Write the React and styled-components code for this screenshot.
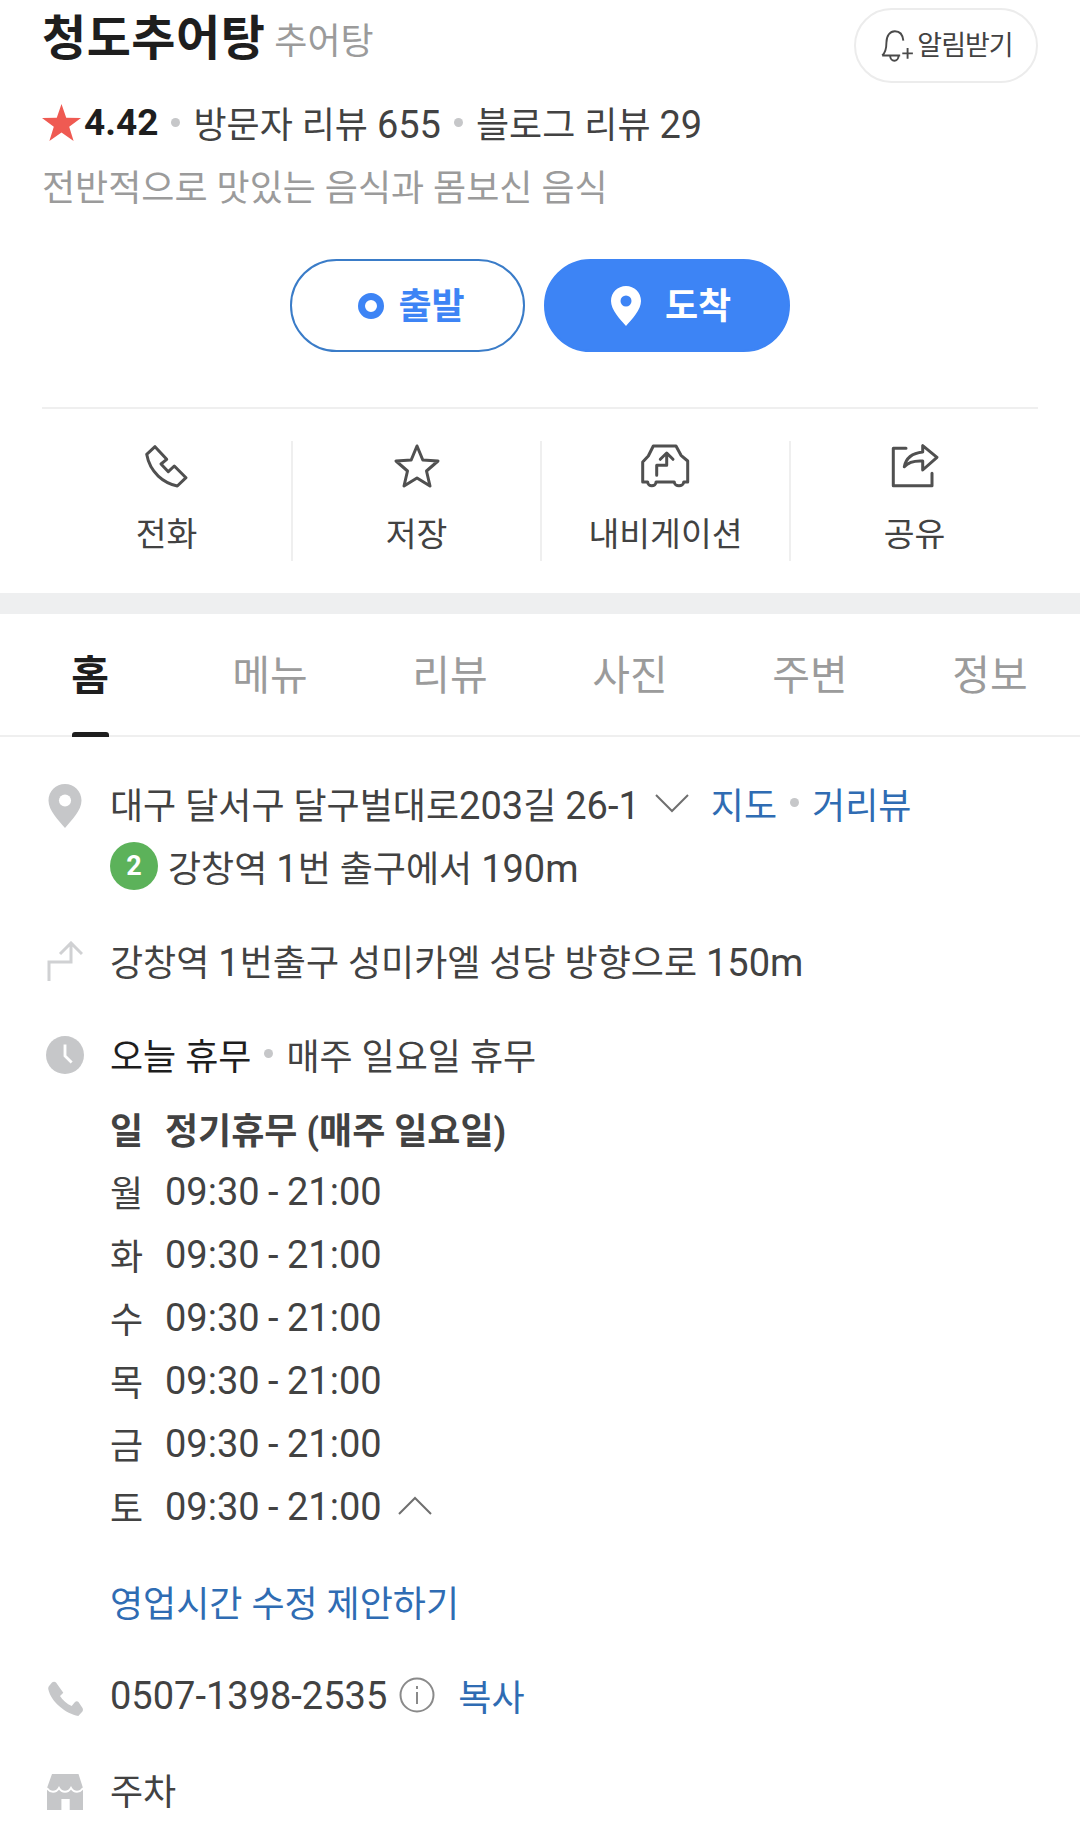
import styled, { createGlobalStyle } from 'styled-components'

const GlobalStyle = createGlobalStyle`
  html, body {
    margin: 0;
    padding: 0;
    background: #fff;
  }
  body {
    font-family: Roboto, "Noto Sans CJK KR", sans-serif;
    color: #424242;
  }
`

const TABS = ['홈', '메뉴', '리뷰', '사진', '주변', '정보']

const HOURS = [
  { day: '일', time: '정기휴무 (매주 일요일)', bold: true },
  { day: '월', time: '09:30 - 21:00' },
  { day: '화', time: '09:30 - 21:00' },
  { day: '수', time: '09:30 - 21:00' },
  { day: '목', time: '09:30 - 21:00' },
  { day: '금', time: '09:30 - 21:00' },
  { day: '토', time: '09:30 - 21:00', last: true },
]

function PhoneOutline() {
  return (
    <svg width="46" height="46" viewBox="24 12 46 46" fill="none" stroke="#505050" strokeWidth="3" strokeLinejoin="round">
      <path d="M35 15.700 46.700 28.300 41 33 48.300 40.700 54.300 35 66 46.700 57.300 55C44 52 30 42 26.700 23.300Z" />
    </svg>
  )
}

function StarOutline() {
  return (
    <svg width="48" height="46" viewBox="0 0 48 46" fill="none" stroke="#505050" strokeWidth="3" strokeLinejoin="round">
      <path d="M24 3 29.800 17 45 18 33.500 28 37 43 24 35 11 43 14.500 28 3 18 18.200 17Z" />
    </svg>
  )
}

function NaviOutline() {
  return (
    <svg width="49" height="44" viewBox="20 12 49 44" fill="none" stroke="#505050" strokeWidth="3" strokeLinejoin="round" strokeLinecap="round">
      <path d="M32.300 14H55L60 23.300 66.700 29V50H62.700C62.700 55 53.300 55 53.300 50H35C35 55 26.700 55 26.700 50H21.700V30L27.300 24Z" />
      <path d="M35.700 43.300V33.300H45.700V22M39.300 27.300 45.700 21 52 27.300" />
    </svg>
  )
}

function ShareOutline() {
  return (
    <svg width="50" height="46" viewBox="29 13 50 46" fill="none" stroke="#505050" strokeWidth="3" strokeLinejoin="round" strokeLinecap="round">
      <path d="M45 18.300H32.300V55.700H71V43.300" />
      <path d="M76 27.300 61.700 15.700V22C52 23 45 28 43.300 36.700 48 31.500 54 30.500 61.700 31V40Z" />
    </svg>
  )
}

function PinIcon({ color, hole, width, height }) {
  return (
    <svg width={width} height={height} viewBox="0 0 30 40">
      <path fill={color} d="M15 0C6.700 0 0 6.600 0 15 0 24 9 33 15 40 21 33 30 24 30 15 30 6.600 23.300 0 15 0Z" />
      <circle cx="15" cy="15" r="5.500" fill={hole} />
    </svg>
  )
}

export default function App() {
  return (
    <Page>
      <GlobalStyle />
      <Summary>
        <TitleRow>
          <TitleGroup>
            <Title>청도추어탕</Title>
            <Category>추어탕</Category>
          </TitleGroup>
          <AlertButton>
            <svg width="36" height="36" viewBox="0 0 34 34" fill="none" stroke="#4a4a4a" strokeWidth="1.800">
              <path d="M3 26C6.500 23 7 19 7 14 7 7 10.500 3 15 3 19.500 3 22.500 6.500 23 12M3 26H20M10.500 26C10.500 32.500 18.500 32.500 18.500 26" />
              <path d="M27 19V29M22 24H32" />
            </svg>
            <AlertLabel>알림받기</AlertLabel>
          </AlertButton>
        </TitleRow>
        <RatingRow>
          <svg width="39" height="37" viewBox="0 0 38 36">
            <path fill="#ef5a52" d="M19 0 23.600 13.400 38 13.600 26.500 22.200 30.800 36 19 27.700 7.200 36 11.500 22.200 0 13.600 14.400 13.400Z" />
          </svg>
          <Score>4.42</Score>
          <Dot />
          <span>방문자 리뷰 <Num>655</Num></span>
          <Dot />
          <span>블로그 리뷰 <Num>29</Num></span>
        </RatingRow>
        <Description>전반적으로 맛있는 음식과 몸보신 음식</Description>
        <RouteButtons>
          <RouteButton>
            <StartDot />
            <RouteLabel>출발</RouteLabel>
          </RouteButton>
          <RouteButton $primary>
            <PinIcon color="#fff" hole="#3d84f5" width={30} height={40} />
            <RouteLabel>도착</RouteLabel>
          </RouteButton>
        </RouteButtons>
        <Actions>
          <Action>
            <ActionIcon><PhoneOutline /></ActionIcon>
            전화
          </Action>
          <Action>
            <ActionIcon><StarOutline /></ActionIcon>
            저장
          </Action>
          <Action>
            <ActionIcon><NaviOutline /></ActionIcon>
            내비게이션
          </Action>
          <Action>
            <ActionIcon><ShareOutline /></ActionIcon>
            공유
          </Action>
        </Actions>
      </Summary>
      <Band />
      <Tabs>
        {TABS.map((tab, i) => (
          <Tab key={tab} $active={i === 0}>{tab}</Tab>
        ))}
      </Tabs>
      <Info>
        <InfoRow>
          <IconCell><PinIcon color="#c6c7c9" hole="#fff" width={34} height={44} /></IconCell>
          <InfoBody>
            <Line>
              <span>대구 달서구 달구벌대로<Num>203</Num>길 <Num>26-1</Num></span>
              <Chevron $gap={15} viewBox="0 0 34 20" width="34" height="20"><path d="M1 2 17 18 33 2" /></Chevron>
              <LinkText $gap={22}>지도</LinkText>
              <Dot />
              <LinkText>거리뷰</LinkText>
            </Line>
            <Line>
              <SubwayBadge>2</SubwayBadge>
              <span>강창역 <Num>1</Num>번 출구에서 <Num>190m</Num></span>
            </Line>
          </InfoBody>
        </InfoRow>
        <InfoRow>
          <IconCell>
            <svg width="36" height="40" viewBox="0 0 36 40" fill="none" stroke="#d0d1d3" strokeWidth="3">
              <path d="M2 40V21H24V2M13 13 24 2 35 13" />
            </svg>
          </IconCell>
          <InfoBody>
            <Line><span>강창역 <Num>1</Num>번출구 성미카엘 성당 방향으로 <Num>150m</Num></span></Line>
          </InfoBody>
        </InfoRow>
        <InfoRow>
          <IconCell>
            <svg width="40" height="40" viewBox="0 0 40 40">
              <circle cx="20" cy="20" r="20" fill="#c6c7c9" />
              <path d="M20 9V21L27 28" fill="none" stroke="#fff" strokeWidth="3" />
            </svg>
          </IconCell>
          <InfoBody>
            <Line>
              <Strong>오늘 휴무</Strong>
              <Dot />
              매주 일요일 휴무
            </Line>
            <Hours>
              {HOURS.map((h) => (
                <HourRow key={h.day} $bold={h.bold}>
                  <Day>{h.day}</Day>
                  {h.bold ? h.time : <NumLine>{h.time}</NumLine>}
                  {h.last && (
                    <Chevron $gap={16} viewBox="0 0 34 20" width="34" height="20"><path d="M1 18 17 2 33 18" /></Chevron>
                  )}
                </HourRow>
              ))}
            </Hours>
            <SuggestLine><LinkText>영업시간 수정 제안하기</LinkText></SuggestLine>
          </InfoBody>
        </InfoRow>
        <InfoRow>
          <IconCell $top={17}>
            <svg width="37" height="37" viewBox="17 19 37 37">
              <path fill="#c6c7c9" d="M22 21.500C23 20.500 25 20.300 26 21.500L33.300 31.700 30 35C32.500 39 37 43 41.700 45L45 41C46 40 47.500 40 48.500 41L52.500 47C53.300 48.500 53 50 52 51L48.300 55C36 53 21 41 18.300 28.300 18 27 18.500 25.500 19.500 24.500Z" />
            </svg>
          </IconCell>
          <InfoBody>
            <Line>
              <NumLine>0507-1398-2535</NumLine>
              <InfoGlyph>
                <svg width="36" height="36" viewBox="0 0 36 36" fill="none" stroke="#8a8a8a" strokeWidth="2">
                  <circle cx="18" cy="18" r="16.500" />
                  <path d="M18 15V27M18 9V12" />
                </svg>
              </InfoGlyph>
              <LinkText $gap={23}>복사</LinkText>
            </Line>
          </InfoBody>
        </InfoRow>
        <InfoRow>
          <IconCell $top={17}>
            <svg width="36" height="36" viewBox="0 0 36 36">
              <path fill="#c6c7c9" d="M5 0H31.500L36 14V36H22.700V25H14.400V36H0V14Z" />
              <path fill="none" stroke="#fff" strokeWidth="2" d="M0 14C3 19 9 19 12 14 15 19 21 19 24 14 27 19 33 19 36 14" />
            </svg>
          </IconCell>
          <InfoBody>
            <Line>주차</Line>
          </InfoBody>
        </InfoRow>
      </Info>
    </Page>
  )
}

const Page = styled.div`
  width: 1080px;
  height: 1843px;
  overflow: hidden;
  background: #fff;
`

const Summary = styled.section`
  padding: 8px 42px 0;
`

const TitleRow = styled.div`
  display: flex;
  justify-content: space-between;
  align-items: flex-start;
  height: 74px;
`

const TitleGroup = styled.div`
  display: flex;
  align-items: center;
  gap: 9px;
  height: 62px;
`

const Title = styled.h1`
  margin: 0;
  font-size: 48px;
  font-weight: 700;
  line-height: 62px;
  letter-spacing: 0.5px;
  color: #1e1e1e;
`

const Category = styled.span`
  padding-bottom: 3px;
  font-size: 36px;
  color: #9b9b9b;
`

const AlertButton = styled.div`
  display: flex;
  align-items: center;
  justify-content: center;
  gap: 2px;
  box-sizing: border-box;
  width: 184px;
  height: 75px;
  border: 2px solid #ececec;
  border-radius: 38px;
  font-size: 27px;
  letter-spacing: -1px;
  color: #424242;
`

const AlertLabel = styled.span`
  padding-bottom: 4px;
`

const RatingRow = styled.div`
  display: flex;
  align-items: center;
  margin-top: 19px;
  height: 42px;
  font-size: 36px;
  color: #424242;
`

const Num = styled.span`
  font-size: 38px;
`

const NumLine = styled(Num)`
  padding-top: 2px;
  word-spacing: -1px;
`

const Score = styled.span`
  margin-left: 3px;
  font-size: 37px;
  font-weight: 700;
  color: #1e1e1e;
`

const Dot = styled.i`
  display: inline-block;
  flex: none;
  width: 9px;
  height: 9px;
  margin: 0 13px;
  border-radius: 50%;
  background: #c6c7c9;
`

const Description = styled.p`
  margin: 25px 0 0;
  font-size: 36px;
  line-height: 42px;
  color: #9b9b9b;
`

const RouteButtons = styled.div`
  display: flex;
  justify-content: center;
  gap: 19px;
  margin-top: 49px;
`

const RouteButton = styled.div`
  display: flex;
  align-items: center;
  justify-content: center;
  gap: ${({ $primary }) => ($primary ? '24px' : '14px')};
  box-sizing: border-box;
  width: ${({ $primary }) => ($primary ? '246px' : '235px')};
  height: 93px;
  padding-left: 8px;
  border-radius: 47px;
  border: 2px solid ${({ $primary }) => ($primary ? '#3d84f5' : '#3a7cc8')};
  background: ${({ $primary }) => ($primary ? '#3d84f5' : '#fff')};
  color: ${({ $primary }) => ($primary ? '#fff' : '#3d84f5')};
  font-size: 36px;
  font-weight: 700;
`

const RouteLabel = styled.span`
  padding-bottom: 6px;
`

const StartDot = styled.i`
  box-sizing: border-box;
  width: 26px;
  height: 26px;
  border: 7px solid #3d84f5;
  border-radius: 50%;
`

const Actions = styled.div`
  display: grid;
  grid-template-columns: repeat(4, 1fr);
  margin-top: 55px;
  padding-top: 32px;
  border-top: 2px solid #efefef;
  padding-bottom: 32px;
`

const Action = styled.div`
  display: flex;
  flex-direction: column;
  align-items: center;
  height: 120px;
  font-size: 33.500px;
  line-height: 48px;
  color: #424242;

  & + & {
    border-left: 2px solid #efefef;
  }
`

const ActionIcon = styled.div`
  display: flex;
  align-items: center;
  justify-content: center;
  height: 50px;
  margin-bottom: 20px;
`

const Band = styled.div`
  height: 21px;
  background: #eeeff0;
`

const Tabs = styled.nav`
  display: grid;
  grid-template-columns: repeat(6, 1fr);
  height: 121px;
  border-bottom: 2px solid #efefef;
`

const Tab = styled.div`
  position: relative;
  display: flex;
  justify-content: center;
  align-items: center;
  padding-bottom: 6px;
  font-size: 41px;
  font-weight: ${({ $active }) => ($active ? 700 : 400)};
  color: ${({ $active }) => ($active ? '#1e1e1e' : '#9b9b9b')};

  ${({ $active }) =>
    $active &&
    `&::after {
      content: '';
      position: absolute;
      left: 72px;
      bottom: -2px;
      width: 37px;
      height: 5px;
      border-radius: 3px 3px 0 0;
      background: #1e1e1e;
    }`}
`

const Info = styled.div`
  display: flex;
  flex-direction: column;
  gap: 31px;
  padding: 34px 42px 0 46px;
`

const InfoRow = styled.div`
  display: flex;
`

const IconCell = styled.div`
  display: flex;
  justify-content: center;
  width: 38px;
  margin-right: 26px;
  padding-top: ${({ $top }) => $top || 13}px;
`

const InfoBody = styled.div`
  flex: 1;
  min-width: 0;
`

const Line = styled.div`
  display: flex;
  align-items: center;
  height: 63px;
  font-size: 36px;
  color: #424242;
  white-space: pre;
`

const Chevron = styled.svg`
  flex: none;
  margin-left: ${({ $gap }) => $gap}px;
  fill: none;
  stroke: #6f6f6f;
  stroke-width: 2;
`

const LinkText = styled.span`
  margin-left: ${({ $gap }) => $gap || 0}px;
  color: #2f6cb3;
`

const SubwayBadge = styled.span`
  display: inline-flex;
  align-items: center;
  justify-content: center;
  flex: none;
  width: 48px;
  height: 48px;
  margin-right: 10px;
  border-radius: 50%;
  background: #5cb25a;
  color: #fff;
  font-size: 27px;
  font-weight: 700;
`

const Strong = styled.span`
  color: #1e1e1e;
`

const Hours = styled.div`
  margin-top: 11px;
`

const HourRow = styled.div`
  display: flex;
  align-items: center;
  height: 63px;
  font-size: 36px;
  color: #424242;
  font-weight: ${({ $bold }) => ($bold ? 700 : 400)};
`

const Day = styled.span`
  width: 55px;
`

const SuggestLine = styled(Line)`
  margin-top: 32px;
`

const InfoGlyph = styled.span`
  display: inline-flex;
  margin-left: 12px;
`
